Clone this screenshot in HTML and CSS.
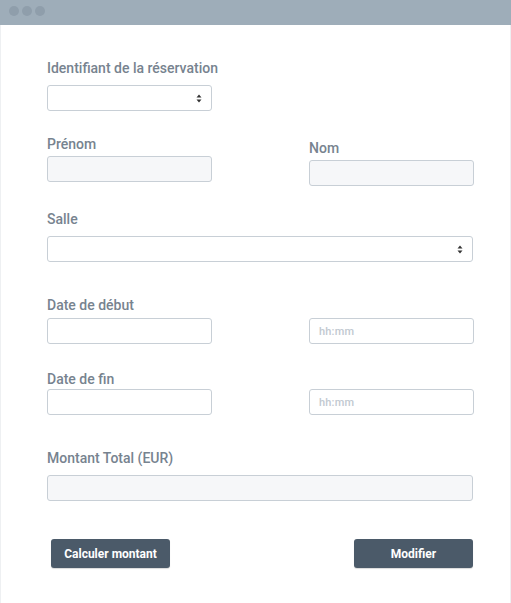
FILE: index.html
```html
<!DOCTYPE html>
<html lang="fr">
<head>
<meta charset="utf-8">
<title>Réservation</title>
<link rel="stylesheet" href="styles.css">
</head>
<body>
<div class="window">
  <div class="titlebar">
    <span class="dot"></span><span class="dot"></span><span class="dot"></span>
  </div>
  <form class="form">
    <div class="group g-id">
      <label class="label">Identifiant de la réservation</label>
      <div class="select small gap9">
        <svg class="arrows" width="6" height="9" viewBox="0 0 6 9"><path d="M3 0.5L5.5 3.5H0.5Z M3 8.5L5.5 5.5H0.5Z" fill="#333"/></svg>
      </div>
    </div>

    <div class="row g-names">
      <div class="group">
        <label class="label">Prénom</label>
        <div class="input filled gap4"></div>
      </div>
      <div class="group shift4">
        <label class="label">Nom</label>
        <div class="input filled gap4"></div>
      </div>
    </div>

    <div class="group g-salle">
      <label class="label">Salle</label>
      <div class="select wide gap9">
        <svg class="arrows" width="6" height="9" viewBox="0 0 6 9"><path d="M3 0.5L5.5 3.5H0.5Z M3 8.5L5.5 5.5H0.5Z" fill="#333"/></svg>
      </div>
    </div>

    <div class="row g-debut">
      <div class="group">
        <label class="label">Date de début</label>
        <div class="input gap5"></div>
      </div>
      <div class="group pad-label">
        <div class="input gap5"><span class="ph">hh:mm</span></div>
      </div>
    </div>

    <div class="row g-fin">
      <div class="group">
        <label class="label">Date de fin</label>
        <div class="input gap2"></div>
      </div>
      <div class="group pad-label">
        <div class="input gap2"><span class="ph">hh:mm</span></div>
      </div>
    </div>

    <div class="group g-montant">
      <label class="label">Montant Total (EUR)</label>
      <div class="input filled wide gap9"></div>
    </div>

    <div class="actions">
      <button type="button" class="btn btn-left">Calculer montant</button>
      <button type="button" class="btn">Modifier</button>
    </div>
  </form>
</div>
</body>
</html>
```

FILE: styles.css
```css
html, body {
  margin: 0;
  padding: 0;
  background: #ffffff;
}
body {
  font-family: Roboto, "Liberation Sans", sans-serif;
  width: 511px;
  height: 603px;
  overflow: hidden;
}
.window {
  height: 603px;
  box-sizing: border-box;
  border-left: 1px solid #eef0f2;
  border-right: 1px solid #eef0f2;
}
.titlebar {
  height: 25px;
  background: #9eadb9;
  display: flex;
  align-items: center;
  gap: 3px;
  padding-left: 9px;
  margin: 0 -1px;
}
.dot {
  width: 10px;
  height: 10px;
  border-radius: 50%;
  background: #8f9eab;
  margin-top: -3px;
}
.form {
  padding: 35px 0 0 46px;
  width: 426px;
}
.group {
  display: flex;
  flex-direction: column;
}
.label {
  font-size: 14px;
  font-weight: 500;
  line-height: 16px;
  height: 16px;
  color: #77838f;
  letter-spacing: 0;
  white-space: nowrap;
}
.row {
  display: grid;
  grid-template-columns: 165px 165px;
  column-gap: 97px;
  align-items: start;
}
.shift4 { padding-top: 4px; }
.pad-label { padding-top: 16px; }
.g-names { margin-top: 25px; }
.g-salle { margin-top: 25px; }
.g-debut { margin-top: 35px; }
.g-fin { margin-top: 27px; }
.g-montant { margin-top: 35px; }
.gap9 { margin-top: 9px; }
.gap5 { margin-top: 5px; }
.gap4 { margin-top: 4px; }
.gap2 { margin-top: 2px; }

.input, .select {
  box-sizing: border-box;
  height: 26px;
  width: 165px;
  border: 1px solid #c8cfd6;
  border-radius: 3px;
  background: #ffffff;
  display: flex;
  align-items: center;
}
.filled { background: #f6f7f9; }
.wide { width: 426px; }
.select {
  justify-content: flex-end;
  padding-right: 9px;
}
.arrows { display: block; }
.ph {
  font-size: 11px;
  font-weight: 500;
  color: #c2c9d1;
  padding-left: 9px;
  letter-spacing: 0.2px;
}
.actions {
  margin-top: 38px;
  display: flex;
  justify-content: space-between;
  align-items: center;
}
.btn {
  height: 29px;
  width: 119px;
  border: none;
  border-radius: 3px;
  background: #4b5a69;
  color: #ffffff;
  font-family: Roboto, "Liberation Sans", sans-serif;
  font-weight: 700;
  font-size: 12px;
  letter-spacing: 0;
  padding: 0;
  box-shadow: 0 1px 1px rgba(0,0,0,0.15);
}
.btn-left { margin-left: 4px; }
```
